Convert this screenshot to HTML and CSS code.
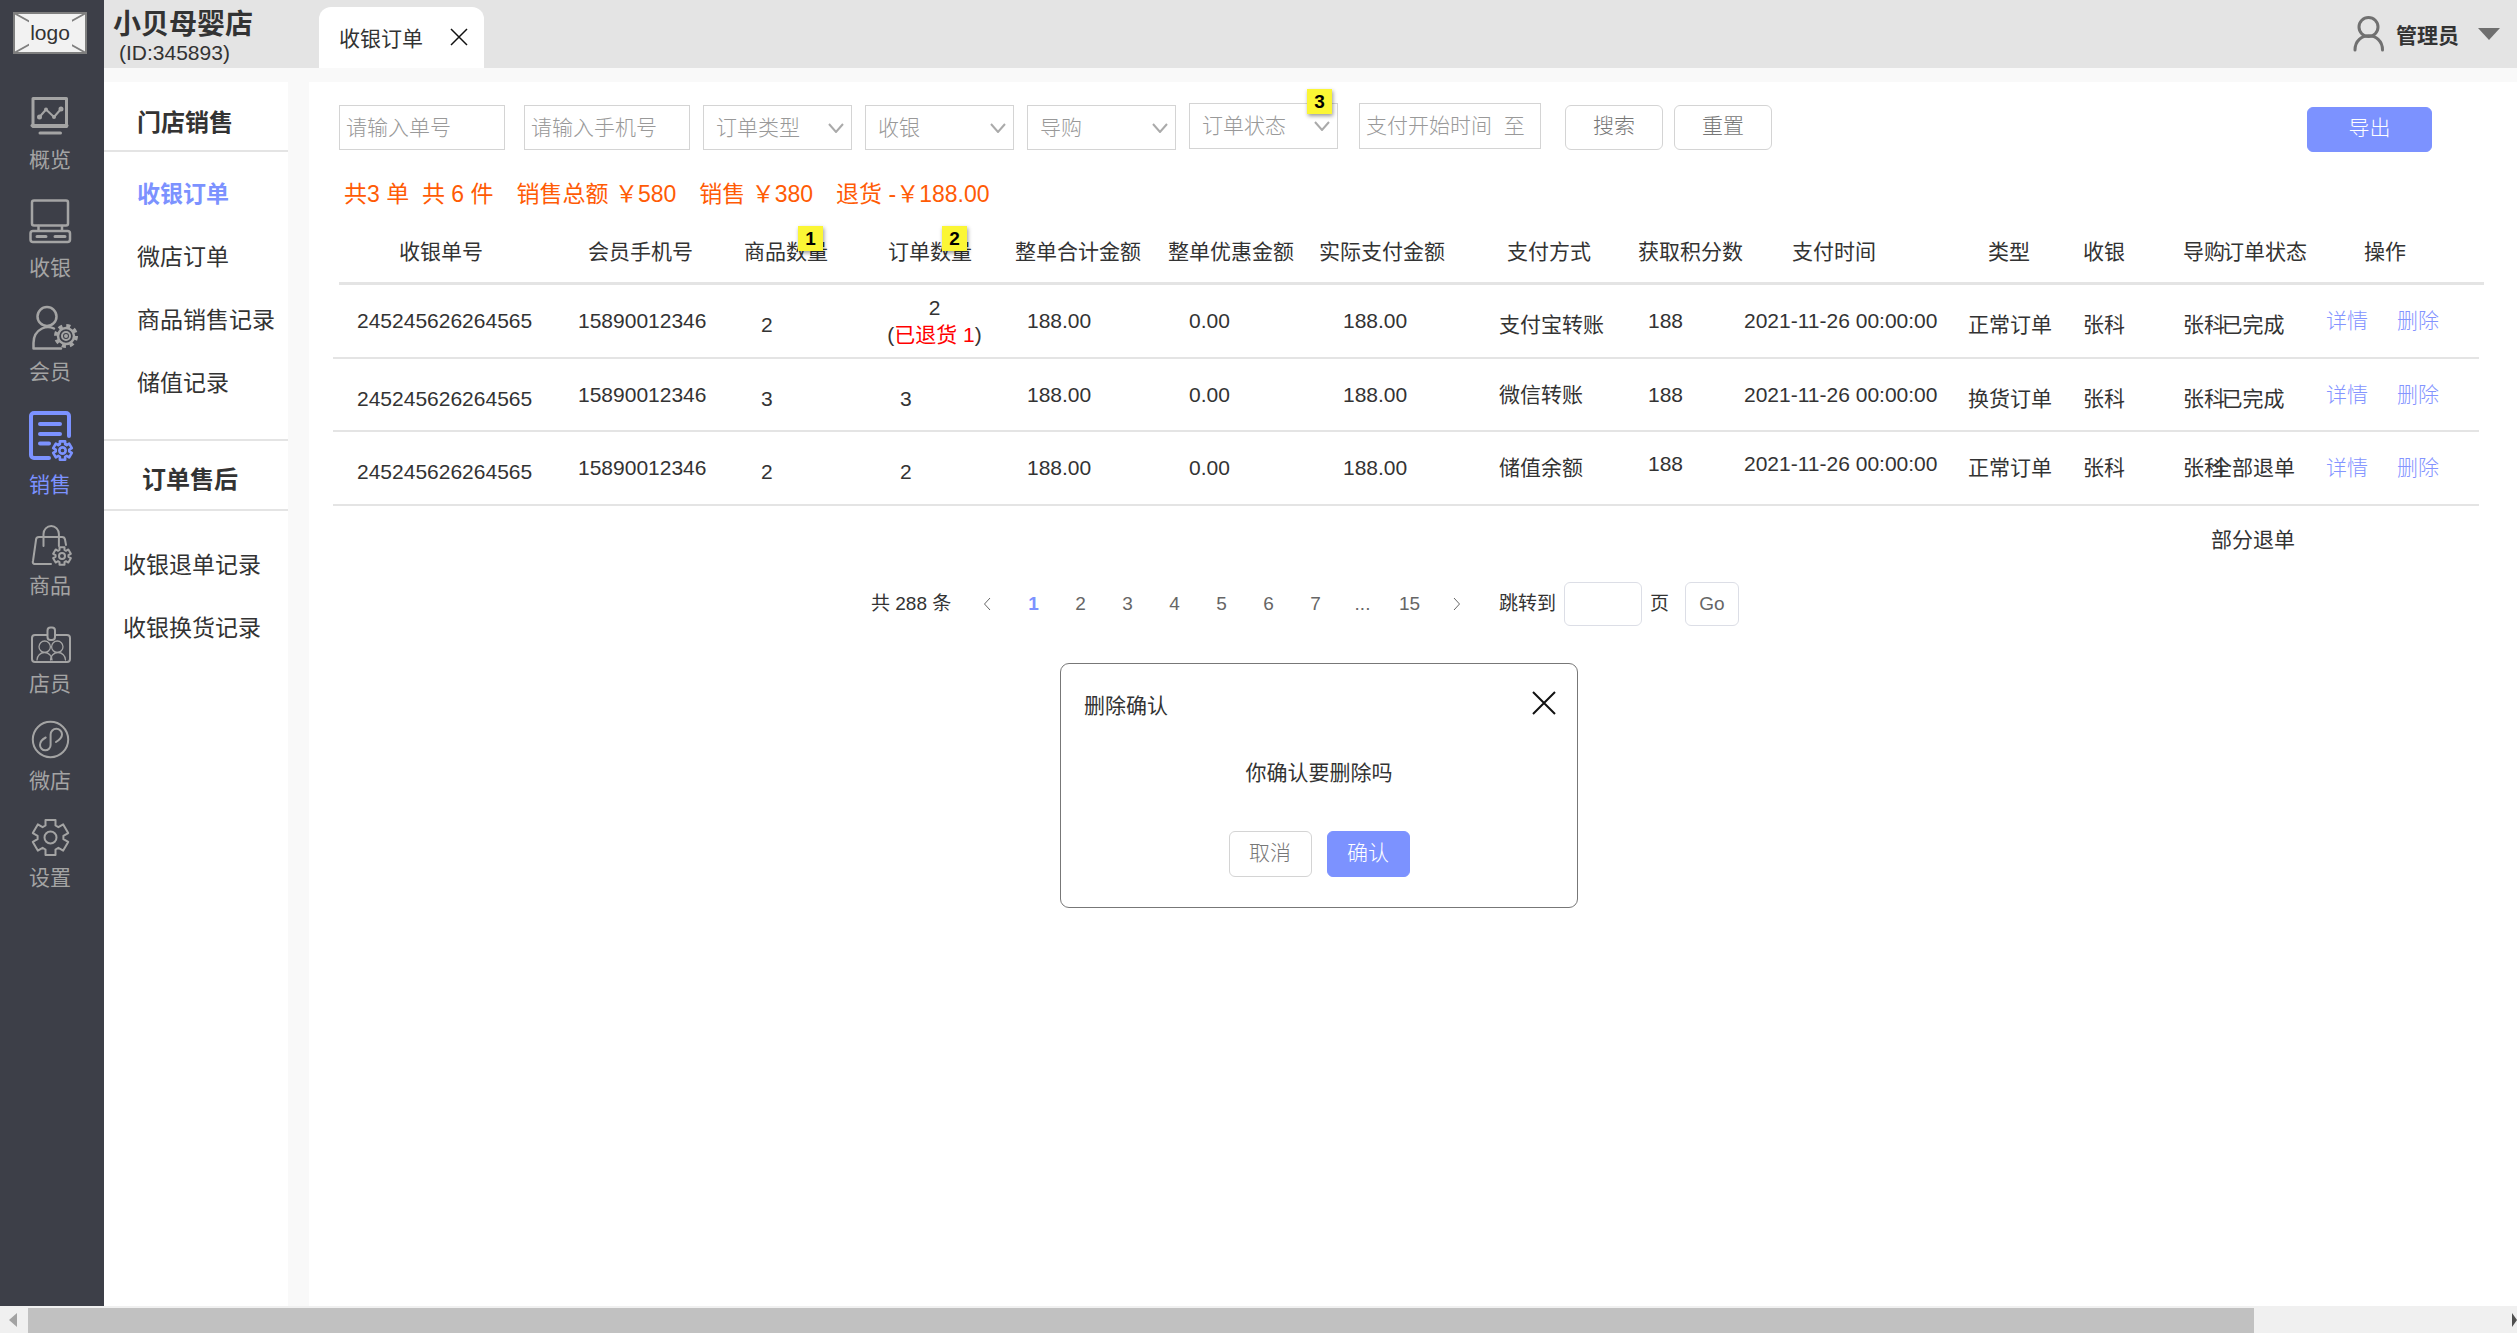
FILE: index.html
```html
<!DOCTYPE html>
<html lang="zh-CN">
<head>
<meta charset="utf-8">
<title>收银订单</title>
<link rel="stylesheet" href="styles.css">
</head>
<body>
<svg class="defs" aria-hidden="true">
  <symbol id="gear" viewBox="-20 -20 40 40" overflow="visible">
    <path d="M-5-12V-17.5H5V-12L7.9-10.3 12.7-13.1 17.7-4.4 12.9-1.7V1.7L17.7 4.4 12.7 13.1 7.9 10.3 5 12V17.5H-5V12L-7.9 10.3-12.7 13.1-17.7 4.4-12.9 1.7V-1.7L-17.7-4.4-12.7-13.1-7.9-10.3Z"/>
    <circle r="6"/>
  </symbol>
  <symbol id="chevron" viewBox="0 0 16 10"><path d="M1 1l7 8 7-8"/></symbol>
</svg>
<div class="shell">
  <div class="app">
    <nav class="rail">
      <svg class="logo" viewBox="0 0 74 42" role="img" aria-label="logo">
        <rect x="1" y="1" width="72" height="40"/>
        <path d="M1 1l72 40M1 41L73 1"/>
        <rect class="logo-plate" x="16" y="8" width="43" height="27"/>
        <text x="37" y="28" text-anchor="middle">logo</text>
      </svg>
      <a class="rail-item" href="#">
        <svg width="50" height="41"><rect x="4" y="1.5" width="33.5" height="28" stroke-width="3"/><path d="M3 28.500h35" stroke-width="3"/><path d="M11 36h20.500" stroke-width="3"/><path d="M10.500 20L17 12.500 25 20 32 12"/><g class="solid"><circle cx="10.500" cy="20" r="1.500"/><circle cx="17" cy="12.500" r="1"/><circle cx="25" cy="20" r="1"/><circle cx="32" cy="12" r="1.500"/></g></svg>
        概览</a>
      <a class="rail-item" href="#">
        <svg width="50" height="48"><rect x="3" y="2.500" width="36" height="25" rx="2" stroke-width="2.500"/><path d="M9.500 28v4M33 28v4" stroke-width="2.500"/><rect x="1.500" y="33" width="39.500" height="11" rx="2.500" stroke-width="2.500"/><path d="M8 38.500h9M26 38.500h10" stroke-width="3"/></svg>
        收银</a>
      <a class="rail-item" href="#">
        <svg width="50" height="44"><circle cx="18" cy="10.500" r="9.500" stroke-width="2.500"/><path d="M25 22.500C22 21 17 20.500 13 22.500 7 25.500 4.500 30 4.500 37V42.500H32" stroke-width="2.500"/><circle cx="37" cy="30" r="8" stroke-width="2.500"/><circle class="teeth" cx="37" cy="30" r="10"/><circle cx="37" cy="30" r="4"/><circle cx="37" cy="30" r="1"/></svg>
        会员</a>
      <a class="rail-item active" href="#">
        <svg width="50" height="53"><path d="M40 26V6a3 3 0 0 0-3-3H5a3 3 0 0 0-3 3V45a3 3 0 0 0 3 3H20" stroke-width="4"/><path d="M11 14h20M11 24h20M11 33.500h9" stroke-width="4"/><use href="#gear" x="23" y="30" width="21" height="21" stroke-width="5"/></svg>
        销售</a>
      <a class="rail-item" href="#">
        <svg width="50" height="41"><path d="M14.500 23V11a7.700 8 0 0 1 15.400 0V23M22 41H6a2 2 0 0 1-2-3L7 17a3 3 0 0 1 3-3H33a3 3 0 0 1 3 2.500L37 22"/><use href="#gear" x="23" y="23" width="20" height="20" stroke-width="4"/></svg>
        商品</a>
      <a class="rail-item" href="#">
        <svg width="50" height="38"><rect x="3" y="11" width="38" height="27" rx="3"/><rect class="clip" x="18.500" y="3.500" width="7.500" height="12.500" rx="3"/><g stroke-width="1.300"><circle cx="15.700" cy="22.700" r="5.700"/><circle cx="28.300" cy="22.700" r="5.700"/><path d="M8 36a7.500 7.500 0 0 1 15 0M21.500 36a7.500 7.500 0 0 1 15 0"/></g></svg>
        店员</a>
      <a class="rail-item" href="#">
        <svg width="50" height="37"><circle cx="21.500" cy="17.500" r="17.700"/><path d="M16.700 15.500C13 17.500 11 20 11 23a5.300 5.300 0 0 0 10.600 0V12.500a5.700 5.700 0 0 1 11.400 0C33 15.500 31 17.500 27 20"/></svg>
        微店</a>
      <a class="rail-item" href="#">
        <svg width="50" height="37"><use href="#gear" x="1.500" y="-1.500" width="40" height="40"/></svg>
        设置</a>
    </nav>
    <div class="workspace">
      <header class="topbar">
        <div class="shop">
          <h1>小贝母婴店</h1>
          <p>(ID:345893)</p>
        </div>
        <div class="tab">收银订单
          <button class="close" aria-label="关闭标签"><svg width="18" height="18" viewBox="0 0 18 18"><path d="M1 1l16 16M17 1L1 17"/></svg></button>
        </div>
        <button class="user">
          <svg width="32" height="36" viewBox="0 0 32 36"><circle cx="15.500" cy="11" r="9.500"/><path d="M2 34c0-19 27.500-19 27.500 0"/></svg>
          <span>管理员</span>
          <i class="caret"></i>
        </button>
      </header>
      <div class="columns">
        <aside class="panel">
          <h2>门店销售</h2>
          <ul>
            <li><a class="current" href="#">收银订单</a></li>
            <li><a href="#">微店订单</a></li>
            <li><a href="#">商品销售记录</a></li>
            <li><a href="#">储值记录</a></li>
          </ul>
          <h2 class="after-sale">订单售后</h2>
          <ul class="after-list">
            <li><a href="#">收银退单记录</a></li>
            <li><a href="#">收银换货记录</a></li>
          </ul>
        </aside>
        <main class="main">
          <form class="filters">
            <input class="field order-no" aria-label="单号" placeholder="请输入单号">
            <input class="field phone" aria-label="手机号" placeholder="请输入手机号">
            <div class="pick"><select class="field" aria-label="订单类型"><option>订单类型</option></select><svg><use href="#chevron"/></svg></div>
            <div class="pick"><select class="field" aria-label="收银"><option>收银</option></select><svg><use href="#chevron"/></svg></div>
            <div class="pick"><select class="field" aria-label="导购"><option>导购</option></select><svg><use href="#chevron"/></svg></div>
            <div class="pick raised status-pick"><select class="field" aria-label="订单状态"><option>订单状态</option></select><svg><use href="#chevron"/></svg><span class="note">3</span></div>
            <input class="field date raised" aria-label="支付时间" placeholder="支付开始时间&nbsp; 至">
            <button class="btn search" type="button">搜索</button>
            <button class="btn reset" type="button">重置</button>
            <button class="btn primary export" type="button">导出</button>
          </form>
          <p class="summary"><span>共3 单&nbsp; 共 6 件</span><span>销售总额 ￥580</span><span>销售 ￥380</span><span>退货 -￥188.00</span></p>
          <table class="orders">
            <thead>
              <tr><th>收银单号</th><th>会员手机号</th><th>商品数量<span class="note">1</span></th><th>订单数量<span class="note">2</span></th><th>整单合计金额</th><th>整单优惠金额</th><th>实际支付金额</th><th>支付方式</th><th>获取积分数</th><th>支付时间</th><th>类型</th><th>收银</th><th>导购</th><th>订单状态</th><th>操作</th></tr>
            </thead>
            <tbody>
              <tr><td>245245626264565</td><td>15890012346</td><td class="low">2</td><td class="returned">2<br>(<em>已退货 1</em>)</td><td>188.00</td><td>0.00</td><td>188.00</td><td class="low">支付宝转账</td><td>188</td><td>2021-11-26 00:00:00</td><td class="low">正常订单</td><td class="low">张科</td><td class="low">张科</td><td class="low state">已完成</td><td><a href="#">详情</a><a href="#">删除</a></td></tr>
              <tr><td class="low">245245626264565</td><td>15890012346</td><td class="low">3</td><td class="low count">3</td><td>188.00</td><td>0.00</td><td>188.00</td><td>微信转账</td><td>188</td><td>2021-11-26 00:00:00</td><td class="low">换货订单</td><td class="low">张科</td><td class="low">张科</td><td class="low state">已完成</td><td><a href="#">详情</a><a href="#">删除</a></td></tr>
              <tr><td class="low">245245626264565</td><td>15890012346</td><td class="low">2</td><td class="low count">2</td><td>188.00</td><td>0.00</td><td>188.00</td><td>储值余额</td><td class="high">188</td><td class="high">2021-11-26 00:00:00</td><td>正常订单</td><td>张科</td><td>张科</td><td class="state">全部退单</td><td><a href="#">详情</a><a href="#">删除</a></td></tr>
              <tr class="rest"><td class="state">部分退单</td></tr>
            </tbody>
          </table>
          <nav class="pager">
            <span class="total">共 288 条</span>
            <a href="#" aria-label="上一页"><svg width="8" height="14" viewBox="0 0 8 14"><path d="M7 1L1.500 7 7 13"/></svg></a>
            <a class="on" href="#">1</a><a href="#">2</a><a href="#">3</a><a href="#">4</a><a href="#">5</a><a href="#">6</a><a href="#">7</a><a href="#">...</a><a href="#">15</a>
            <a href="#" aria-label="下一页"><svg width="8" height="14" viewBox="0 0 8 14"><path d="M1 1l5.500 6L1 13"/></svg></a>
            <label for="jump">跳转到</label>
            <input id="jump">
            <span>页</span>
            <button type="button">Go</button>
          </nav>
          <section class="dialog" role="dialog" aria-labelledby="dialog-title">
            <header><h3 id="dialog-title">删除确认</h3><button class="close" aria-label="关闭"><svg width="24" height="24" viewBox="0 0 24 24"><path d="M1 1l22 22M23 1L1 23"/></svg></button></header>
            <p>你确认要删除吗</p>
            <footer><button class="btn" type="button">取消</button><button class="btn primary" type="button">确认</button></footer>
          </section>
        </main>
      </div>
    </div>
  </div>
  <div class="scrollbar">
    <i class="arrow-left"></i>
    <div class="track"><div class="thumb"></div></div>
    <i class="arrow-right"></i>
  </div>
</div>
</body>
</html>
```

FILE: styles.css
```css
* { box-sizing: border-box; }

body, h1, h2, h3, p, ul { margin: 0; padding: 0; }

body {
  font: 400 21px/24px "Liberation Sans", "Noto Sans CJK SC", sans-serif;
  color: #333;
  background: #fff;
}

button, input, select { font: inherit; color: inherit; margin: 0; }
button { padding: 0; border: 0; background: none; }
a { color: inherit; text-decoration: none; }
ul { list-style: none; }
svg { fill: none; stroke: currentColor; stroke-width: 2; flex: none; }
.defs { display: block; width: 0; height: 0; }

.shell { min-height: 100vh; display: flex; flex-direction: column; overflow: hidden; }
.app { flex: 1; display: flex; }

/* dark navigation rail */
.rail {
  width: 104px;
  flex: none;
  padding: 12px 0 0 13px;
  background: #3d3f48;
  color: #a4a4a4;
}
.logo { display: block; width: 74px; height: 42px; margin-bottom: 43px; fill: #f2f2f2; stroke: #7f7f7f; }
.logo-plate { stroke: none; }
.logo text { fill: #333; stroke: none; font-size: 21px; }
.rail-item { display: block; padding-left: 16px; margin-bottom: 26px; }
.rail-item svg {
  display: block;
  margin-bottom: 10px;
  overflow: visible;
  stroke-linecap: round;
  stroke-linejoin: round;
}
.rail-item .teeth { stroke-width: 4; stroke-dasharray: 4 3.85; stroke-linecap: butt; }
.rail-item .clip { fill: #3d3f48; }
.rail-item.active { color: #7c92ff; }

.workspace { flex: 1; min-width: 0; display: flex; flex-direction: column; background: #f9f9f9; }

.topbar { height: 68px; display: flex; background: #e4e4e4; }
.shop { width: 215px; padding-left: 9px; }
.shop h1 { font-size: 28px; line-height: 32px; padding-top: 9px; }
.shop p { padding-left: 6px; }
.tab {
  width: 165px;
  margin-top: 7px;
  padding: 2px 16px 0 20px;
  display: flex;
  align-items: center;
  justify-content: space-between;
  background: #fff;
  border-radius: 12px 12px 0 0;
}
.close { display: flex; color: #111; }
.tab .close { margin-bottom: 4px; stroke-width: 1; }
.tab .close svg { stroke-width: 1.5; }
.user { margin-left: auto; padding: 4px 17px 0 0; display: flex; align-items: center; }
.user svg { color: #707070; stroke-width: 3; stroke-linecap: round; margin: 0 11px 4px 0; }
.user span { font-weight: 700; }
.caret { margin: 0 0 4px 19px; border: 11px solid transparent; border-top: 12px solid #6f6f6f; border-bottom: 0; }

.columns { flex: 1; display: flex; gap: 21px; padding-top: 14px; }

/* section menu */
.panel { width: 184px; flex: none; background: #fff; font-size: 23px; }
.panel h2 {
  height: 70px;
  padding: 14px 0 0 33px;
  font-size: 24px;
  line-height: 54px;
  border-bottom: 2px solid #e4e4e4;
}
.panel ul { padding: 11px 0 24px 33px; }
.panel li { line-height: 63px; white-space: nowrap; }
.panel .current { color: #7c92ff; font-weight: 700; }
.panel .after-sale { height: 72px; padding: 9px 0 0 38px; line-height: 60px; border-top: 2px solid #e4e4e4; }
.panel .after-list { padding: 23px 0 0 19px; }

.main { flex: 1; min-width: 0; padding: 21px 33px 0 30px; background: #fff; }

/* filter bar */
.filters { display: flex; align-items: flex-start; height: 76px; font-weight: 300; }
.filters > * { margin-top: 2px; }
.filters > .raised { margin-top: 0; }
.field {
  height: 45px;
  min-width: 0;
  padding: 0 6px;
  border: 1px solid #d4d4d4;
  border-radius: 0;
  background: #fff;
  color: #999;
  appearance: none;
}
.field::placeholder { color: #999; opacity: 1; }
.order-no, .phone { flex: 0 1 166px; }
.order-no { margin-right: 19px; }
.phone { margin-right: 13px; }
.pick { position: relative; flex: 0 1 149px; margin-right: 13px; }
.pick .field { width: 100%; padding-left: 12px; }
.pick svg { position: absolute; right: 8px; top: 18px; width: 16px; height: 10px; color: #aaa; pointer-events: none; }
.status-pick { margin-right: 21px; }
.raised.field, .raised .field { height: 46px; }
.date { flex: 0 1 182px; margin-right: 24px; }
.btn {
  width: 98px;
  height: 45px;
  padding-bottom: 3px;
  border: 1px solid #d4d4d4;
  border-radius: 6px;
  color: #777;
  background: #fff;
  font-weight: 300;
}
.reset { margin-left: 11px; }
.btn.primary { border-color: #7c92ff; background: #7c92ff; color: #fff; }
.export { width: 125px; margin: 4px 52px 0 auto; }

.note {
  position: absolute;
  width: 25px;
  height: 25px;
  background: #fbf635;
  color: #000;
  font-weight: 700;
  font-size: 19px;
  line-height: 25px;
  text-align: center;
  box-shadow: 1px 2px 4px rgba(0, 0, 0, .4);
}
.pick .note { top: -14px; left: 118px; }

.summary { display: flex; gap: 23px; padding: 1px 0 0 5px; font-size: 23px; line-height: 28px; color: #ff5b05; }

/* orders */
.orders { display: block; margin: 13px 0 0 -6px; white-space: nowrap; }
.orders thead, .orders tbody { display: block; }
.orders tr { display: grid; align-items: center; }
.orders th, .orders td { padding: 0; text-align: left; }
.orders th { position: relative; font-weight: 400; }
.orders thead tr {
  margin-left: 6px;
  height: 64px;
  border-bottom: 3px solid #e4e4e4;
  grid-template-columns: minmax(0, 249fr) minmax(0, 156fr) minmax(0, 144fr) minmax(0, 127fr) minmax(0, 153fr) minmax(0, 151fr) minmax(0, 188fr) minmax(0, 131fr) minmax(0, 154fr) minmax(0, 196fr) minmax(0, 95fr) minmax(0, 100fr) minmax(0, 40fr) minmax(0, 141fr) minmax(0, 120fr);
}
.orders th:first-child { padding-left: 60px; }
.orders th .note { top: -14px; left: 54px; }
.orders tbody tr {
  height: 74px;
  margin-right: 5px;
  border-bottom: 2px solid #e4e4e4;
  grid-template-columns: minmax(0, 245fr) minmax(0, 183fr) minmax(0, 126fr) minmax(0, 140fr) minmax(0, 162fr) minmax(0, 154fr) minmax(0, 156fr) minmax(0, 149fr) minmax(0, 96fr) minmax(0, 224fr) minmax(0, 115fr) minmax(0, 100fr) minmax(0, 28fr) minmax(0, 115fr) minmax(0, 153fr);
}
.orders tbody tr:nth-child(2) { height: 73px; }
.orders td:first-child { padding-left: 24px; }
.orders td.low { padding-top: 8px; }
.orders td.high { padding-bottom: 8px; }
.orders td.count { padding-left: 13px; }
.orders td.returned { width: 95px; text-align: center; line-height: 27px; }
.orders td em { font-style: normal; color: #f00; }
.orders td.state { padding-right: 31px; text-align: center; }
.orders td a { color: #8494ff; font-weight: 300; margin-right: 29px; }
.orders tbody tr.rest { height: 68px; border: 0; }
.orders .rest td.state { grid-column: 14; padding-left: 0; }

.pager { display: flex; align-items: center; height: 44px; margin: 8px 0 0 532px; font-size: 19px; }
.total { width: 92px; }
.pager a { width: 47px; display: flex; justify-content: center; color: #666; }
.pager a.on { color: #7c92ff; font-weight: 700; }
.pager a svg { stroke-width: 1; }
.pager label { margin: 0 8px 0 19px; }
.pager input, .pager button { height: 44px; border: 1px solid #dcdee6; border-radius: 6px; background: #fff; }
.pager input { width: 78px; margin-right: 8px; }
.pager button { width: 54px; margin-left: 16px; color: #666; }

.dialog { width: 518px; height: 245px; margin: 37px 0 0 721px; border: 1px solid #777; border-radius: 9px; background: #fff; }
.dialog header { display: flex; justify-content: space-between; padding: 27px 21px 0 23px; }
.dialog h3 { font-size: 21px; font-weight: 400; line-height: 30px; }
.dialog p { margin-top: 40px; text-align: center; }
.dialog footer { display: flex; justify-content: center; gap: 15px; margin-top: 46px; }
.dialog .btn { width: 83px; height: 46px; }

/* window scrollbar */
.scrollbar { height: 27px; display: flex; align-items: center; background: #f0f0f0; }
.arrow-left { width: 28px; display: flex; padding-left: 9px; }
.arrow-left::before { content: ""; border: 7px solid transparent; border-right: 8px solid #a3a3a3; border-left: 0; }
.track { flex: 1; align-self: stretch; padding-top: 2px; }
.thumb { width: 89.6%; height: 100%; background: #c1c1c1; }
.arrow-right { border: 7px solid transparent; border-left: 5px solid #505050; border-right: 0; }
```
